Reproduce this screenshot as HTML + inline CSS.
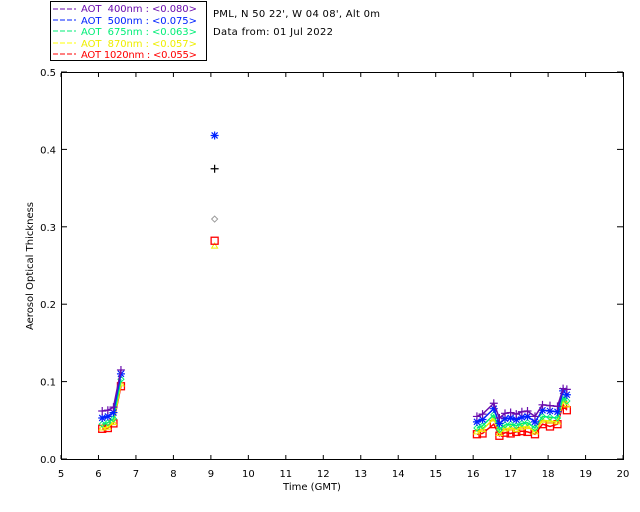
<!DOCTYPE html><html><head><style>
html,body{margin:0;padding:0;background:#fff;width:640px;height:512px;overflow:hidden}
svg text{font-family:"DejaVu Sans","Liberation Sans",sans-serif;font-size:10px}
</style></head><body>
<svg id="s" width="640" height="512" xmlns="http://www.w3.org/2000/svg">
<rect x="50.5" y="1.5" width="156" height="59" fill="#fff" stroke="#000"/>
<g font-size="10">
<line x1="53" y1="9" x2="76" y2="9" stroke="#6a0dad" stroke-dasharray="5,2"/><text x="81" y="12" fill="#6a0dad" textLength="116" lengthAdjust="spacing" xml:space="preserve">AOT  400nm : &lt;0.080&gt;</text>
<line x1="53" y1="20" x2="76" y2="20" stroke="#0022ff" stroke-dasharray="5,2"/><text x="81" y="24" fill="#0022ff" textLength="116" lengthAdjust="spacing" xml:space="preserve">AOT  500nm : &lt;0.075&gt;</text>
<line x1="53" y1="31" x2="76" y2="31" stroke="#00ee77" stroke-dasharray="5,2"/><text x="81" y="35" fill="#00ee77" textLength="116" lengthAdjust="spacing" xml:space="preserve">AOT  675nm : &lt;0.063&gt;</text>
<line x1="53" y1="43" x2="76" y2="43" stroke="#ffff00" stroke-dasharray="5,2"/><text x="81" y="47" fill="#eeee00" textLength="116" lengthAdjust="spacing" xml:space="preserve">AOT  870nm : &lt;0.057&gt;</text>
<line x1="53" y1="54" x2="76" y2="54" stroke="#ff0000" stroke-dasharray="5,2"/><text x="81" y="58" fill="#ff0000" textLength="116" lengthAdjust="spacing" xml:space="preserve">AOT 1020nm : &lt;0.055&gt;</text>
</g>
<text x="213" y="17" textLength="167" lengthAdjust="spacing">PML, N 50 22', W 04 08', Alt 0m</text>
<text x="213" y="35" textLength="120" lengthAdjust="spacing">Data from: 01 Jul 2022</text>
<rect x="61.5" y="72.5" width="562" height="387" fill="none" stroke="#000"/>
<g id="ax"></g>
<text x="312" y="490" text-anchor="middle">Time (GMT)</text>
<text transform="translate(33,266) rotate(-90)" text-anchor="middle">Aerosol Optical Thickness</text>
<g id="d"></g>
</svg>
<script>
var NS="http://www.w3.org/2000/svg";
function X(t){return 61+(t-5)*37.47}
function Y(v){return 459-v*774}
function el(n,a,p){var e=document.createElementNS(NS,n);for(var k in a)e.setAttribute(k,a[k]);(p||document.getElementById('d')).appendChild(e);return e}
var ax=document.getElementById('ax');
for(var h=5;h<=20;h++){var x=X(h);el('line',{x1:x,y1:459,x2:x,y2:455,stroke:'#000'},ax);el('line',{x1:x,y1:73,x2:x,y2:77,stroke:'#000'},ax);var t=el('text',{x:x,y:477,'text-anchor':'middle'},ax);t.textContent=h;}
for(var i=0;i<=5;i++){var y=Y(i/10);el('line',{x1:61,y1:y,x2:67,y2:y,stroke:'#000'},ax);el('line',{x1:617,y1:y,x2:623,y2:y,stroke:'#000'},ax);var t=el('text',{x:56,y:y+4,'text-anchor':'end'},ax);t.textContent=(i/10).toFixed(1);}
var mt=[6.1,6.25,6.4,6.6];
var at=[16.1,16.25,16.55,16.7,16.85,17.0,17.15,17.3,17.45,17.65,17.85,18.05,18.25,18.4,18.5];
var b1=[.032,.033,.045,.030,.034,.033,.035,.036,.035,.032,.045,.042,.045,.07,.063];
var S=[
 {c:'#6a0dad',m:[.062,.063,.067,.115],off:.023,pk:[0,0,0,0,0,0,0,0,0,0,0,0,0,-.004,0],mk:'+'},
 {c:'#0022ff',m:[.053,.055,.060,.110],off:.016,pk:[],mk:'*'},
 {c:'#00ee77',m:[.045,.047,.052,.103],off:.008,pk:[],mk:'d'},
 {c:'#eeee00',m:[.040,.041,.047,.097],off:.003,pk:[],mk:'t'},
 {c:'#ff0000',m:[.039,.040,.046,.094],off:0,pk:[],mk:'s'}];
function mark(k,x,y,c){
 if(k=='+'){el('path',{d:'M'+(x-4)+' '+y+'h8M'+x+' '+(y-4)+'v8',stroke:c,'stroke-width':1.2,fill:'none'})}
 else if(k=='*'){el('path',{d:'M'+(x-4)+' '+y+'h8M'+x+' '+(y-4)+'v8M'+(x-3)+' '+(y-3)+'l6 6M'+(x+3)+' '+(y-3)+'l-6 6',stroke:c,'stroke-width':1.2,fill:'none'})}
 else if(k=='d'){el('path',{d:'M'+x+' '+(y-3)+'l3 3l-3 3l-3 -3z',stroke:c,fill:'none'})}
 else if(k=='t'){el('path',{d:'M'+(x-3)+' '+(y+2)+'h6l-3 -5z',stroke:c,fill:'none'})}
 else {el('rect',{x:x-3.5,y:y-3.5,width:7,height:7,stroke:c,fill:'none','stroke-width':1.3})}
}
S.slice().reverse().forEach(function(s){
 var p=mt.map(function(t,i){return X(t)+','+Y(s.m[i])}).join(' ');
 el('polyline',{points:p,fill:'none',stroke:s.c,'stroke-width':1.5});
 var f=function(i){return Y(b1[i]+s.off+(s.pk[i]||0)+(s.off?(i%3)*.002:0))};
 var q=at.map(function(t,i){return X(t)+','+f(i)}).join(' ');
 el('polyline',{points:q,fill:'none',stroke:s.c,'stroke-width':1.5});
 mt.forEach(function(t,i){mark(s.mk,X(t),Y(s.m[i]),s.c)});
 at.forEach(function(t,i){mark(s.mk,X(t),f(i),s.c)});
});
var x9=X(9.1);
mark('+',x9,Y(.375),'#000');mark('*',x9,Y(.418),'#0022ff');mark('d',x9,Y(.31),'#999');
mark('t',x9,Y(.275),'#eeee00');mark('s',x9,Y(.282),'#ff0000');
</script>
</body></html>
